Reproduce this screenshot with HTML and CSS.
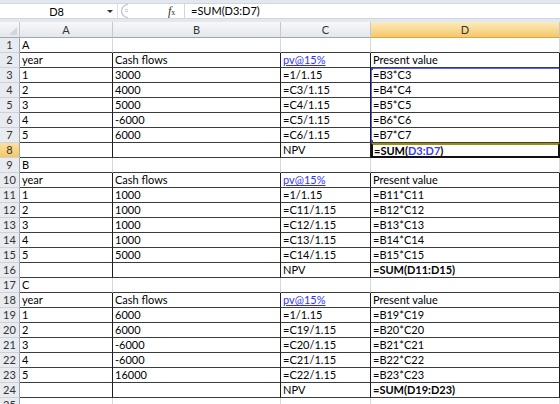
FILE: index.html
```html
<!DOCTYPE html>
<html lang="en">

<head>
    <meta charset="UTF-8">
    <title>NPV sheet</title>
    <link rel="stylesheet" href="styles.css">
</head>

<body>
    <div class="formula-bar">
        <div class="name-box">
            <span class="name">D8</span>
            <span class="arrow"></span>
        </div>
        <div class="grip">
            <svg width="16" height="16" viewBox="0 0 16 16">
                <path d="M10 1.5 A6.5 6.5 0 0 0 10 14.5" fill="none" stroke="#b9c1cc" stroke-width="1.2"/>
                <path d="M7 6.5 H10 M7 8.5 H10" stroke="#c3c9d2" stroke-width="1"/>
            </svg>
        </div>
        <div class="fx"><i>f</i><span>x</span></div>
        <div class="formula">=SUM(D3:D7)</div>
    </div>

    <div class="sheet">
        <div class="row head">
            <div class="corner"><span class="tri"></span></div>
            <div class="col">A</div>
            <div class="col">B</div>
            <div class="col">C</div>
            <div class="col sel">D</div>
        </div>

        <div class="row dark">
            <div class="rh">1</div><div class="c">A</div><div class="c"></div><div class="c"></div><div class="c"></div>
        </div>
        <div class="row dark tb">
            <div class="rh">2</div><div class="c">year</div><div class="c">Cash flows</div><div class="c"><a class="link">pv@15%</a></div><div class="c">Present value</div>
        </div>
        <div class="row dark tb">
            <div class="rh">3</div><div class="c">1</div><div class="c">3000</div><div class="c">=1/1.15</div><div class="c rng rng-top">=B3*C3<span class="dot"></span></div>
        </div>
        <div class="row dark tb">
            <div class="rh">4</div><div class="c">2</div><div class="c">4000</div><div class="c">=C3/1.15</div><div class="c rng">=B4*C4</div>
        </div>
        <div class="row dark tb">
            <div class="rh">5</div><div class="c">3</div><div class="c">5000</div><div class="c">=C4/1.15</div><div class="c rng">=B5*C5</div>
        </div>
        <div class="row dark tb">
            <div class="rh">6</div><div class="c">4</div><div class="c">-6000</div><div class="c">=C5/1.15</div><div class="c rng">=B6*C6</div>
        </div>
        <div class="row dark tb">
            <div class="rh">7</div><div class="c">5</div><div class="c">6000</div><div class="c">=C6/1.15</div><div class="c rng">=B7*C7<span class="dot dot-bottom"></span></div>
        </div>
        <div class="row dark tb">
            <div class="rh sel">8</div><div class="c"></div><div class="c"></div><div class="c">NPV</div><div class="c b active">=SUM(<span class="ref">D3:D7</span>)</div>
        </div>

        <div class="row dark">
            <div class="rh">9</div><div class="c">B</div><div class="c"></div><div class="c"></div><div class="c"></div>
        </div>
        <div class="row dark tb">
            <div class="rh">10</div><div class="c">year</div><div class="c">Cash flows</div><div class="c"><a class="link">pv@15%</a></div><div class="c">Present value</div>
        </div>
        <div class="row dark tb">
            <div class="rh">11</div><div class="c">1</div><div class="c">1000</div><div class="c">=1/1.15</div><div class="c">=B11*C11</div>
        </div>
        <div class="row dark tb">
            <div class="rh">12</div><div class="c">2</div><div class="c">1000</div><div class="c">=C11/1.15</div><div class="c">=B12*C12</div>
        </div>
        <div class="row dark tb">
            <div class="rh">13</div><div class="c">3</div><div class="c">1000</div><div class="c">=C12/1.15</div><div class="c">=B13*C13</div>
        </div>
        <div class="row dark tb">
            <div class="rh">14</div><div class="c">4</div><div class="c">1000</div><div class="c">=C13/1.15</div><div class="c">=B14*C14</div>
        </div>
        <div class="row dark tb">
            <div class="rh">15</div><div class="c">5</div><div class="c">5000</div><div class="c">=C14/1.15</div><div class="c">=B15*C15</div>
        </div>
        <div class="row dark tb">
            <div class="rh">16</div><div class="c"></div><div class="c"></div><div class="c">NPV</div><div class="c b">=SUM(D11:D15)</div>
        </div>

        <div class="row dark">
            <div class="rh">17</div><div class="c">C</div><div class="c"></div><div class="c"></div><div class="c"></div>
        </div>
        <div class="row dark tb">
            <div class="rh">18</div><div class="c">year</div><div class="c">Cash flows</div><div class="c"><a class="link">pv@15%</a></div><div class="c">Present value</div>
        </div>
        <div class="row dark tb">
            <div class="rh">19</div><div class="c">1</div><div class="c">6000</div><div class="c">=1/1.15</div><div class="c">=B19*C19</div>
        </div>
        <div class="row dark tb">
            <div class="rh">20</div><div class="c">2</div><div class="c">6000</div><div class="c">=C19/1.15</div><div class="c">=B20*C20</div>
        </div>
        <div class="row dark tb">
            <div class="rh">21</div><div class="c">3</div><div class="c">-6000</div><div class="c">=C20/1.15</div><div class="c">=B21*C21</div>
        </div>
        <div class="row dark tb">
            <div class="rh">22</div><div class="c">4</div><div class="c">-6000</div><div class="c">=C21/1.15</div><div class="c">=B22*C22</div>
        </div>
        <div class="row dark tb">
            <div class="rh">23</div><div class="c">5</div><div class="c">16000</div><div class="c">=C22/1.15</div><div class="c">=B23*C23</div>
        </div>
        <div class="row dark tb">
            <div class="rh">24</div><div class="c"></div><div class="c"></div><div class="c">NPV</div><div class="c b">=SUM(D19:D23)</div>
        </div>
        <div class="row">
            <div class="rh">25</div><div class="c"></div><div class="c"></div><div class="c"></div><div class="c"></div>
        </div>
    </div>
</body>

</html>
```

FILE: styles.css
```css
* {
    margin: 0;
    padding: 0;
    box-sizing: border-box;
}

body {
    width: 560px;
    height: 404px;
    overflow: hidden;
    background-color: #ffffff;
    font-family: Lato, "Liberation Sans", Arial, sans-serif;
    font-size: 11px;
    color: #000;
}

/* formula bar */
.formula-bar {
    height: 22px;
    padding: 3px 0;
    background-color: #e3e8ee;
    display: flex;
}

.name-box {
    width: 118px;
    background-color: #fff;
    border-top: 1px solid #cfd6df;
    border-bottom: 1px solid #cfd6df;
    border-right: 1px solid #dde2e8;
    display: flex;
    align-items: center;
}

.name {
    flex: 1;
    text-align: center;
    padding-left: 6px;
}

.arrow {
    width: 0;
    height: 0;
    margin-right: 4px;
    border-left: 3px solid transparent;
    border-right: 3px solid transparent;
    border-top: 3px solid #333;
}

.grip {
    width: 50px;
    background-color: #fff;
    border-top: 1px solid #cfd6df;
    border-bottom: 1px solid #cfd6df;
    display: flex;
    align-items: center;
}

.fx {
    width: 16px;
    background-color: #fff;
    border-top: 1px solid #cfd6df;
    border-bottom: 1px solid #cfd6df;
    font-family: "Liberation Serif", serif;
    font-size: 12px;
    color: #333;
    line-height: 14px;
}

.fx span {
    font-size: 8px;
}

.formula {
    flex: 1;
    background-color: #fff;
    border: 1px solid #cfd6df;
    border-right: none;
    padding-left: 6px;
    line-height: 14px;
}

/* sheet grid */
.row {
    display: grid;
    grid-template-columns: 20px 93px 168px 90px 189px;
    height: 15px;
}

.row.head {
    height: 16px;
}

.corner,
.col {
    background: linear-gradient(#f7f8fa, #e4e7eb);
    border-right: 1px solid #c4c9d1;
    border-bottom: 1px solid #9ea6b1;
    text-align: center;
    color: #333;
    line-height: 15px;
}

.corner {
    position: relative;
}

.tri {
    position: absolute;
    right: 2px;
    bottom: 2px;
    width: 0;
    height: 0;
    border-left: 8px solid transparent;
    border-bottom: 8px solid #d2d6dc;
}

.col.sel {
    background: linear-gradient(#fcebbf, #f4c869);
    border-bottom-color: #e2a33a;
}

.rh {
    background-color: #e8ebef;
    border-right: 1px solid #9ea6b1;
    border-bottom: 1px solid #cdd2d9;
    text-align: center;
    color: #333;
    line-height: 14px;
}

.rh.sel {
    background: linear-gradient(#fbe0a0, #f3c869);
}

.c {
    border-right: 1px solid #d8d8d8;
    border-bottom: 1px solid #d8d8d8;
    padding-left: 2px;
    line-height: 14px;
    white-space: nowrap;
    overflow: hidden;
}

.row.dark .c {
    border-bottom-color: #3c3c3c;
}

.row.tb .c {
    border-right-color: #1c1c1c;
}

.b {
    font-weight: bold;
}

.link {
    color: #3232ff;
    text-decoration: underline;
}

/* range highlight D3:D7 */
.rng {
    position: relative;
    box-shadow: inset 1px 0 #5a68f0;
}

.rng-top {
    box-shadow: inset 1px 1px #5a68f0;
}

.dot {
    position: absolute;
    left: -1px;
    top: -1px;
    width: 3px;
    height: 3px;
    background-color: #2c3fe8;
}

.dot-bottom {
    top: auto;
    bottom: -1px;
}

/* active cell D8 */
.row.tb .active {
    border: 2px solid #111;
    border-top-color: #9c8f10;
    line-height: 11px;
    padding-left: 1px;
}

.ref {
    color: #3b3bf0;
}
```
